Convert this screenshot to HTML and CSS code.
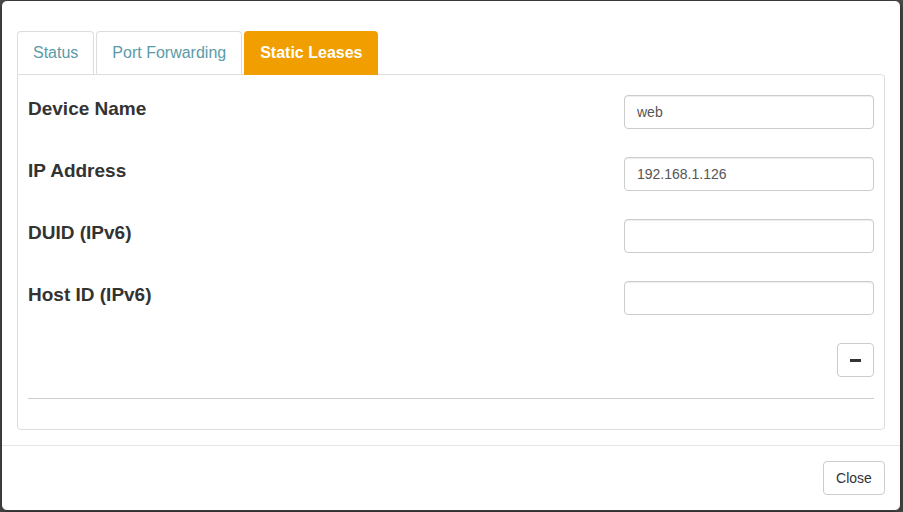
FILE: index.html
```html
<!DOCTYPE html>
<html>
<head>
<meta charset="utf-8">
<link rel="stylesheet" href="styles.css">
</head>
<body>
<div class="modal">
  <div class="modal-body">
    <ul class="tabs">
      <li class="tab">Status</li>
      <li class="tab">Port Forwarding</li>
      <li class="tab active">Static Leases</li>
    </ul>
    <div class="panel">
      <div class="row">
        <label class="label">Device Name</label>
        <input class="input" type="text" value="web">
      </div>
      <div class="row">
        <label class="label">IP Address</label>
        <input class="input" type="text" value="192.168.1.126">
      </div>
      <div class="row">
        <label class="label">DUID (IPv6)</label>
        <input class="input" type="text" value="">
      </div>
      <div class="row">
        <label class="label">Host ID (IPv6)</label>
        <input class="input" type="text" value="">
      </div>
      <div class="btn-row">
        <button class="btn btn-minus" type="button"><span class="minus"></span></button>
      </div>
      <hr class="divider">
    </div>
  </div>
  <div class="modal-footer">
    <button class="btn btn-close" type="button">Close</button>
  </div>
</div>
</body>
</html>
```

FILE: styles.css
```css
* { box-sizing: border-box; }
html, body { margin: 0; padding: 0; }
body {
  background: #4e4e4e;
  font-family: "Liberation Sans", Arial, sans-serif;
  color: #333;
  width: 903px;
  height: 512px;
  overflow: hidden;
}
.modal {
  margin: 0 0 0 1px;
  width: 900px;
  background: #fff;
  border: 1px solid #3a3a3a;
  border-radius: 6px;
  box-shadow: 0 3px 9px rgba(0,0,0,.5);
}
.modal-body {
  padding: 30px 15px 15px 15px;
}
.tabs {
  list-style: none;
  margin: 0;
  padding: 0;
  display: flex;
  gap: 2px;
}
.tab {
  font-size: 16px;
  line-height: 22px;
  padding: 10px 15px 10px 15px;
  border: 1px solid #ddd;
  border-bottom: none;
  border-radius: 4px 4px 0 0;
  color: #5a9ba8;
  background: #fff;
}
.tab.active {
  background: #f19e00;
  border-color: #f19e00;
  color: #fff;
  font-weight: bold;
  margin-bottom: -1px;
  position: relative;
}
.panel {
  border: 1px solid #ddd;
  border-radius: 0 4px 4px 4px;
  padding: 20px 10px 30px 10px;
}
.row {
  display: flex;
  justify-content: space-between;
  align-items: flex-start;
  margin-bottom: 28px;
}
.label {
  font-weight: bold;
  font-size: 19px;
  line-height: 22px;
  padding-top: 3px;
  color: #333;
}
.input {
  width: 250px;
  height: 34px;
  border: 1px solid #ccc;
  border-radius: 4px;
  padding: 6px 12px;
  font-family: "Liberation Sans", Arial, sans-serif;
  font-size: 14px;
  color: #555;
  box-shadow: inset 0 1px 1px rgba(0,0,0,.075);
  outline: none;
}
.btn-row {
  display: flex;
  justify-content: flex-end;
  margin-bottom: 21px;
}
.btn {
  background: #fff;
  border: 1px solid #ccc;
  border-radius: 4px;
  font-family: "Liberation Sans", Arial, sans-serif;
  font-size: 14px;
  line-height: 20px;
  color: #333;
  height: 34px;
}
.btn-minus {
  width: 37px;
  padding: 0;
  display: flex;
  align-items: center;
  justify-content: center;
}
.minus {
  display: block;
  width: 11px;
  height: 3px;
  background: #333;
}
.divider {
  margin: 0;
  border: 0;
  border-top: 1px solid #ccc;
  height: 0;
}
.modal-footer {
  border-top: 1px solid #e5e5e5;
  padding: 15px;
  display: flex;
  justify-content: flex-end;
}
.btn-close {
  padding: 6px 12px;
  width: 62px;
}
```
